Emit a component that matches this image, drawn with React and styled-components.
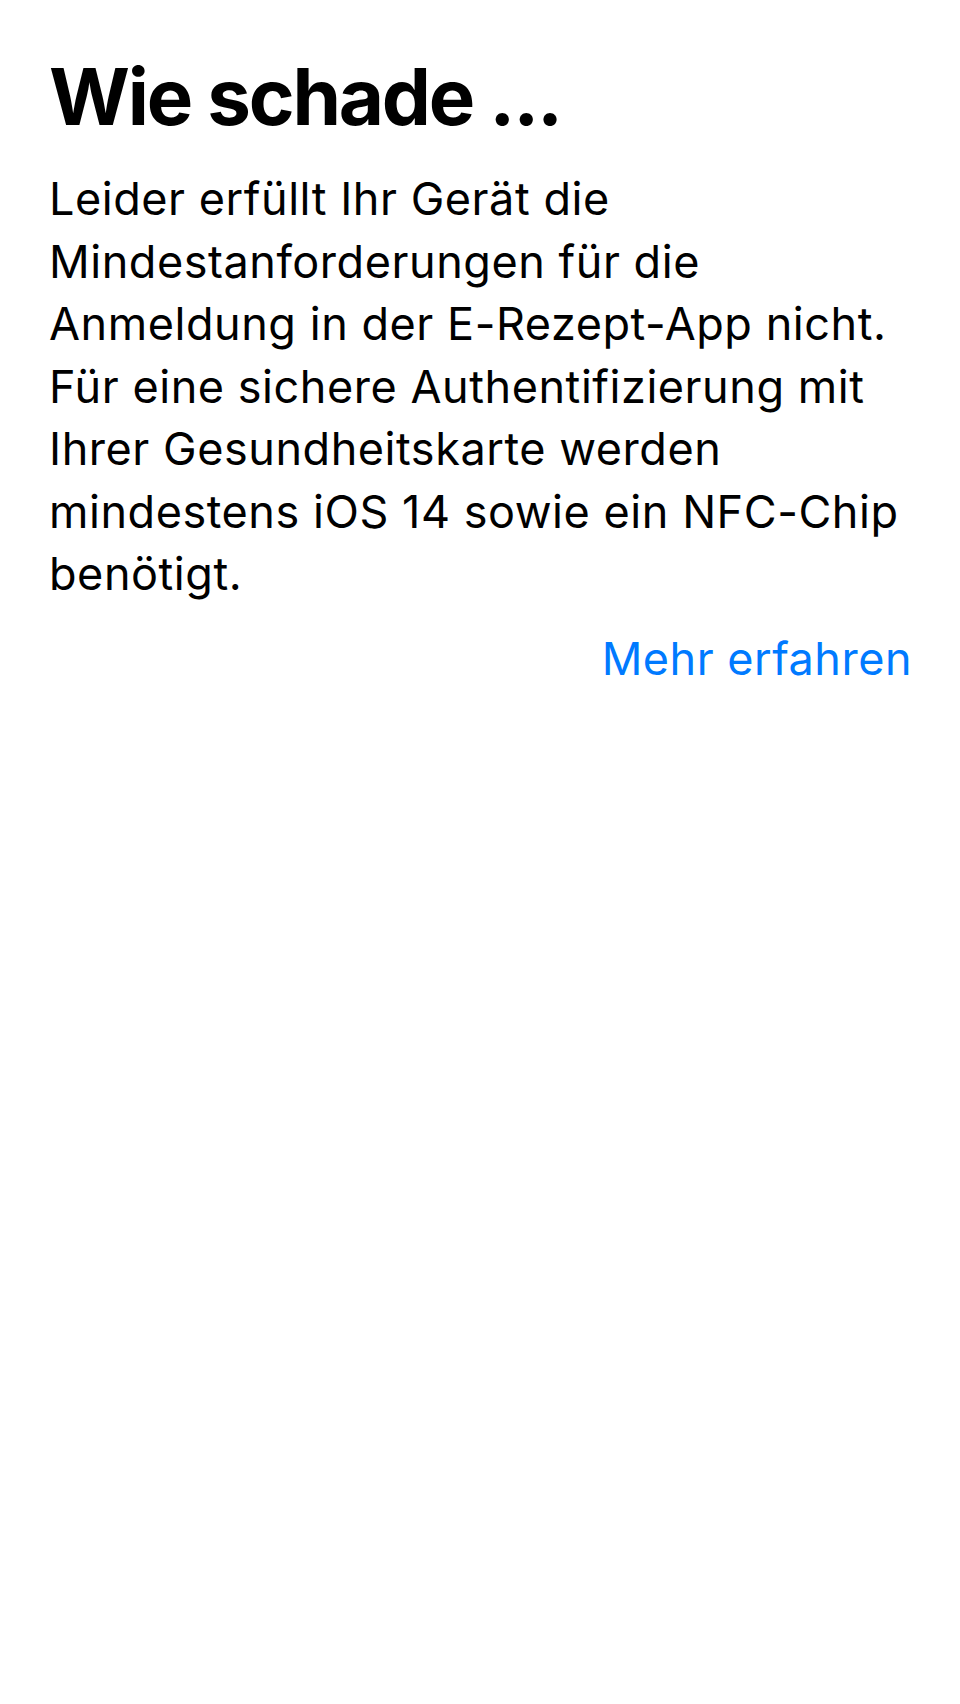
import styled, { createGlobalStyle } from "styled-components";

const GlobalStyle = createGlobalStyle`
  html, body {
    margin: 0;
    padding: 0;
    background: #ffffff;
  }

  body {
    font-family: "Inter", "Noto Sans", sans-serif;
    color: #000000;
  }
`;

const App = () => {
  return (
    <>
      <GlobalStyle />
      <Screen>
        <Title>Wie schade ...</Title>
        <Body>
          Leider erfüllt Ihr Gerät die Mindestanforderungen für die Anmeldung
          in der E-Rezept-App nicht. Für eine sichere Authentifizierung mit
          Ihrer Gesundheitskarte werden mindestens iOS 14 sowie ein NFC-Chip
          benötigt.
        </Body>
        <LinkRow>
          <MoreLink href="#">Mehr erfahren</MoreLink>
        </LinkRow>
      </Screen>
    </>
  );
};

export default App;

const Screen = styled.main`
  min-height: 1704px;
  box-sizing: border-box;
  padding: 50px 48px 0 49px;
  display: flex;
  flex-direction: column;
`;

const Title = styled.h1`
  margin: 0;
  font-size: 78px;
  font-weight: 700;
  line-height: 94px;
  letter-spacing: -2.2px;
`;

const Body = styled.p`
  margin: 24px 0 0 0;
  font-size: 45px;
  font-weight: 400;
  line-height: 62.5px;
  letter-spacing: 0.55px;
`;

const LinkRow = styled.div`
  display: flex;
  justify-content: flex-end;
  margin-top: 22px;
`;

const MoreLink = styled.a`
  font-size: 45px;
  line-height: 62.5px;
  letter-spacing: 0.5px;
  color: #007aff;
  text-decoration: none;
`;
